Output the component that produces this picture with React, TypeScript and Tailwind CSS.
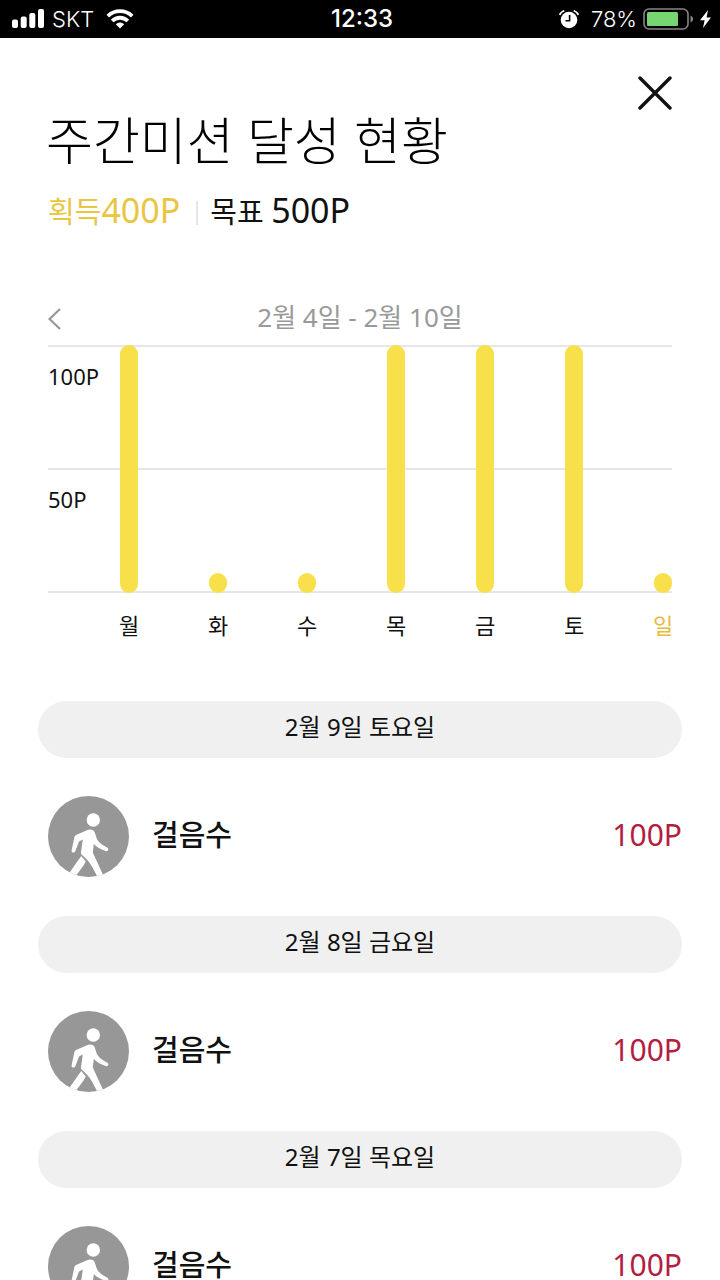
interface DayPoint {
  day: string;
  points: number;
  isToday?: boolean;
}

interface Mission {
  date: string;
  name: string;
  points: number;
}

const MAX_POINTS = 100;

const week: DayPoint[] = [
  { day: '월', points: 100 },
  { day: '화', points: 0 },
  { day: '수', points: 0 },
  { day: '목', points: 100 },
  { day: '금', points: 100 },
  { day: '토', points: 100 },
  { day: '일', points: 0, isToday: true },
];

const missions: Mission[] = [
  { date: '2월 9일 토요일', name: '걸음수', points: 100 },
  { date: '2월 8일 금요일', name: '걸음수', points: 100 },
  { date: '2월 7일 목요일', name: '걸음수', points: 100 },
];

function SignalIcon() {
  return (
    <svg width="32" height="20" viewBox="0 0 32 20" fill="#fff" aria-hidden="true">
      <rect x="0" y="10.5" width="6" height="8.5" rx="2" />
      <rect x="8.7" y="7.5" width="6" height="11.5" rx="2" />
      <rect x="17.3" y="4" width="6" height="15" rx="2" />
      <rect x="26" y="0" width="6" height="19" rx="2" />
    </svg>
  );
}

function WifiIcon() {
  return (
    <svg width="28" height="20" viewBox="0 0 28 20" aria-hidden="true">
      <g fill="none" stroke="#fff" strokeWidth="3.8">
        <path d="M1.8 7.2a17.4 17.4 0 0 1 24.4 0" />
        <path d="M6.2 12a11 11 0 0 1 15.6 0" />
      </g>
      <path d="M14 19.4l-4.2-4.2a6 6 0 0 1 8.4 0z" fill="#fff" />
    </svg>
  );
}

function AlarmIcon() {
  return (
    <svg width="20" height="19" viewBox="0 0 20 19" aria-hidden="true">
      <circle cx="10" cy="10" r="8.3" fill="#fff" />
      <path d="M1 4.2A7 7 0 0 1 4.6 1M19 4.2A7 7 0 0 0 15.4 1" fill="none" stroke="#fff" strokeWidth="1.8" strokeLinecap="round" />
      <path d="M10.6 5v5.8H6.5" fill="none" stroke="#000" strokeWidth="1.6" />
    </svg>
  );
}

function BatteryIcon() {
  return (
    <svg width="51" height="22" viewBox="0 0 51 22" aria-hidden="true">
      <rect x="1" y="1" width="44" height="20" rx="5" fill="none" stroke="#858585" strokeWidth="1.6" />
      <rect x="4" y="4" width="31" height="14" rx="1.5" fill="#76d672" />
      <path d="M47.5 7.5c3.4 1.4 3.4 5.6 0 7z" fill="#858585" />
    </svg>
  );
}

function BoltIcon() {
  return (
    <svg width="12" height="18" viewBox="0 0 12 18" fill="#fff" aria-hidden="true">
      <path d="M8 0L0 10.3h4.6L3 18l8-10.5H6.6z" />
    </svg>
  );
}

function WalkIcon() {
  return (
    <svg className="shrink-0" width="81" height="81" viewBox="0 0 81 81" aria-hidden="true">
      <clipPath id="disc">
        <circle cx="40.5" cy="40.5" r="40.5" />
      </clipPath>
      <circle cx="40.5" cy="40.5" r="40.5" fill="#979797" />
      <g fill="#fff" clipPath="url(#disc)">
        <circle cx="45.3" cy="24" r="6.7" />
        <path d="M39 34.2C42 33 45.3 33.6 46.5 36C48 39.4 48.2 43.2 51 46C53.5 48.6 56.6 50.2 59.4 51.8C61.4 53 60.2 56 57.6 55C53.2 53.200 49 51.500 45.800 48L44.800 56.500L56 81H49.500L44 70.500C41.500 66 37.500 62 33.800 58.800C32.800 57.800 32.900 56.500 33.100 55.500L34.800 43.500L31 45.500L27.300 55.300C26.500 57.400 23.200 56.800 23.600 54.500L26.300 41.500C26.600 40 27.400 39.300 28.600 38.700Z" />
        <path d="M33.2 60L37.8 65.6L35.500 69.500L27 81H18.500Z" />
      </g>
    </svg>
  );
}

function StatusBar() {
  return (
    <div className="grid h-[38px] shrink-0 grid-cols-3 items-center bg-black pl-3 pr-2 font-['Inter',sans-serif] text-[22px] leading-none text-white">
      <div className="flex items-center gap-2">
        <SignalIcon />
        <span className="font-light">SKT</span>
        <div className="pl-1">
          <WifiIcon />
        </div>
      </div>
      <div className="text-center text-2xl leading-none font-medium">12:33</div>
      <div className="flex items-center justify-end gap-1.5">
        <AlarmIcon />
        <span className="pl-1.5 font-light">78%</span>
        <BatteryIcon />
        <BoltIcon />
      </div>
    </div>
  );
}

function WeekChart() {
  return (
    <section className="mt-2.5">
      <div className="grid">
        {/* Grid lines and scale */}
        <div className="col-start-1 row-start-1 flex h-[248px] flex-col text-[22px] leading-[30px]">
          <div className="h-[123px] border-t-2 border-[#e6e6e6] pt-3.5">100P</div>
          <div className="h-[125px] border-y-2 border-[#e6e6e6] pt-3.5">50P</div>
        </div>
        {/* Bars */}
        <div className="col-start-1 row-start-1 ml-[72px] flex h-[248px] items-end justify-between">
          {week.map(({ day, points }) => (
            <div
              key={day}
              className="min-h-5 w-[18px] rounded-full bg-[#f8e04a]"
              style={{ height: `${(points / MAX_POINTS) * 100}%` }}
            />
          ))}
        </div>
      </div>
      <div className="ml-[72px] mt-4 flex justify-between text-[22px] leading-8">
        {week.map(({ day, isToday }) => (
          <div key={day} className="flex w-[18px] justify-center">
            <span className={isToday ? 'text-[#e9b93a]' : ''}>{day}</span>
          </div>
        ))}
      </div>
    </section>
  );
}

function MissionItem({ date, name, points }: Mission) {
  return (
    <li>
      <h2 className="flex h-[57px] items-center justify-center rounded-full bg-[#f0f0f0] pb-1.5 text-2xl">{date}</h2>
      <div className="flex items-center pb-[39px] pl-[10px] pt-[38px]">
        <WalkIcon />
        <div className="mb-1 ml-[23px] flex flex-1 items-center justify-between leading-6">
          <span className="text-[29px] font-medium">{name}</span>
          <span className="text-[30px] text-[#b3203f]">{points}P</span>
        </div>
      </div>
    </li>
  );
}

export default function App() {
  return (
    <div className="flex h-screen flex-col overflow-hidden bg-white font-['Noto_Sans','Noto_Sans_CJK_KR',sans-serif] text-[#111]">
      <StatusBar />
      <main className="min-h-0 flex-1 overflow-hidden">
        <div className="px-12">
          <div className="flex justify-end pt-[38px]">
            <button type="button" aria-label="닫기">
              <svg width="34" height="34" viewBox="0 0 34 34" fill="none" stroke="#111" strokeWidth="3.4" strokeLinecap="round">
                <path d="M2 2l30 30M32 2L2 32" />
              </svg>
            </button>
          </div>
          <h1 className="-ml-0.5 text-[51px] font-light leading-[60px] text-black">주간미션 달성 현황</h1>
          <div className="mt-5 flex items-center text-[29px] leading-10">
            <span className="text-[#e9c63f]">
              획득<span className="text-[34px]">400P</span>
            </span>
            <span className="ml-4 mr-3 mt-1 h-6 w-0.5 bg-[#e6e6e6]" />
            <span>
              목표 <span className="text-[34px]">500P</span>
            </span>
          </div>
          <div className="mt-[67px] grid grid-cols-[1fr_auto_1fr] items-center text-[#999]">
            <button type="button" aria-label="이전 주" className="pt-1">
              <svg width="13" height="22" viewBox="0 0 13 22" fill="none" stroke="#979797" strokeWidth="2.2">
                <path d="M12 1L1.5 11L12 21" />
              </svg>
            </button>
            <span className="text-[26px] leading-9">2월 4일 - 2월 10일</span>
          </div>
          <WeekChart />
        </div>
        <ul className="mt-[60px] px-[38px]">
          {missions.map((mission) => (
            <MissionItem key={mission.date} {...mission} />
          ))}
        </ul>
      </main>
    </div>
  );
}
